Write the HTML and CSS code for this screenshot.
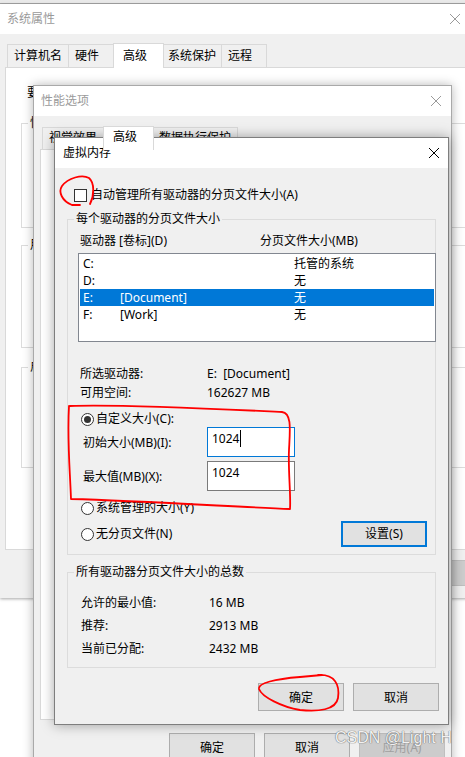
FILE: index.html
```html
<!DOCTYPE html>
<html lang="zh-CN">
<head>
<meta charset="utf-8">
<title>虚拟内存</title>
<link rel="stylesheet" href="styles.css">
</head>
<body>
<div class="desk">
  <div class="backwin"></div>

  <section class="win win1">
    <header class="titlebar tb1">
      <span class="ttl inactive">系统属性</span>
      <svg class="xicon" width="10" height="10" viewBox="0 0 10 10"><path d="M0 0L10 10M10 0L0 10" stroke="#9a9a9a" stroke-width="1"/></svg>
    </header>
    <div class="wbody">
      <nav class="tabs tabs1">
        <span class="tab">计算机名</span>
        <span class="tab">硬件</span>
        <span class="tab sel">高级</span>
        <span class="tab narrow">系统保护</span>
        <span class="tab">远程</span>
      </nav>
      <div class="panel panel1">
        <p class="intro">要进行大多数更改，你必须作为管理员登录。</p>
        <div class="grp bg-white g1a"><div class="gt white">性能</div></div>
        <div class="grp bg-white g1b"><div class="gt white">用户配置文件</div></div>
        <div class="grp bg-white g1c"><div class="gt white">启动和故障恢复</div></div>
      </div>
      <div class="btnrow btnrow1">
        <span class="btn">确定</span>
        <span class="btn">取消</span>
        <span class="btn disabled">应用(A)</span>
      </div>
    </div>
  </section>

  <section class="win win2">
    <header class="titlebar tb2">
      <span class="ttl inactive">性能选项</span>
      <svg class="xicon" width="10" height="10" viewBox="0 0 10 10"><path d="M0 0L10 10M10 0L0 10" stroke="#9a9a9a" stroke-width="1"/></svg>
    </header>
    <div class="wbody">
      <nav class="tabs tabs2">
        <span class="tab">视觉效果</span>
        <span class="tab sel">高级</span>
        <span class="tab">数据执行保护</span>
      </nav>
      <div class="panel panel2"></div>
      <div class="btnrow btnrow2">
        <span class="btn">确定</span>
        <span class="btn">取消</span>
        <span class="btn disabled">应用(A)</span>
      </div>
    </div>
  </section>

  <section class="win win3">
    <header class="titlebar tb3">
      <span class="ttl">虚拟内存</span>
      <svg class="xicon" width="10" height="10" viewBox="0 0 10 10"><path d="M0 0L10 10M10 0L0 10" stroke="#000" stroke-width="1"/></svg>
    </header>
    <div class="wbody body3">
      <label class="checkrow"><span class="checkbox"></span>自动管理所有驱动器的分页文件大小(A)</label>

      <div class="grp g3a">
        <div class="gt">每个驱动器的分页文件大小</div>
        <div class="listhead"><span class="c1">驱动器 [卷标](D)</span><span>分页文件大小(MB)</span></div>
        <div class="listbox">
          <div class="lrow"><span class="ld">C:</span><span class="ll"></span><span>托管的系统</span></div>
          <div class="lrow"><span class="ld">D:</span><span class="ll"></span><span>无</span></div>
          <div class="lrow selrow"><span class="ld">E:</span><span class="ll">[Document]</span><span>无</span></div>
          <div class="lrow"><span class="ld">F:</span><span class="ll">[Work]</span><span>无</span></div>
        </div>
        <div class="info">
          <div class="irow"><span class="ik">所选驱动器:</span><span>E:&nbsp;&nbsp;[Document]</span></div>
          <div class="irow"><span class="ik">可用空间:</span><span>162627 MB</span></div>
        </div>
        <div class="radiorow r1"><span class="radio on"></span>自定义大小(C):</div>
        <div class="frow"><span class="fk">初始大小(MB)(I):</span><span class="field focus">1024<span class="caret"></span></span></div>
        <div class="frow f2"><span class="fk">最大值(MB)(X):</span><span class="field">1024</span></div>
        <div class="radiorow r2"><span class="radio"></span>系统管理的大小(Y)</div>
        <div class="radiorow r3"><span class="radio"></span>无分页文件(N)<span class="btn default setbtn">设置(S)</span></div>
      </div>

      <div class="grp g3b">
        <div class="gt">所有驱动器分页文件大小的总数</div>
        <div class="totals">
          <div class="trow"><span class="tk">允许的最小值:</span><span>16 MB</span></div>
          <div class="trow"><span class="tk">推荐:</span><span>2913 MB</span></div>
          <div class="trow"><span class="tk">当前已分配:</span><span>2432 MB</span></div>
        </div>
      </div>

      <div class="btnrow btnrow3">
        <span class="btn">确定</span>
        <span class="btn">取消</span>
      </div>
    </div>
  </section>

  <svg class="marks" width="465" height="757" viewBox="0 0 465 757">
    <path d="M90 204 C94 196 95 183 89 178 C82 174 68 178 62 186 C58 192 62 201 72 205 L80 205" fill="none" stroke="#f00" stroke-width="1.8" stroke-linecap="round"/>
    <path d="M70 406 C120 404 240 410 282 412 C292 413 290 430 289 450 C288 470 291 495 290 509 C240 507 140 501 71 499 C70 470 67 440 69 406" fill="none" stroke="#f00" stroke-width="1.8" stroke-linecap="round" stroke-linejoin="round"/>
    <path d="M318 675 C335 674 340 685 338 698 C336 710 318 712 300 710 C282 707 262 697 259 689 C258 683 275 679 300 677 L322 675" fill="none" stroke="#f00" stroke-width="1.8" stroke-linecap="round"/>
  </svg>

  <div class="watermark">CSDN @Light H</div>
</div>
</body>
</html>
```

FILE: styles.css
```css
* { box-sizing: border-box; }
body {
  margin: 0;
  font-family: "Noto Sans", "Noto Sans CJK SC", sans-serif;
  font-size: 12px;
  color: #000;
  background: #fff;
}
.desk {
  position: relative;
  width: 465px;
  height: 757px;
  overflow: hidden;
  background: #fff;
}
.backwin {
  position: absolute;
  left: 0; top: 0;
  width: 465px; height: 4px;
  background: #e9e9e9;
  border-bottom: 1px solid #a5a5a5;
}

/* windows */
.win {
  position: absolute;
  background: #f0f0f0;
  display: flex;
  flex-direction: column;
}
.titlebar {
  flex: none;
  height: 30px;
  background: #fff;
  display: flex;
  align-items: center;
  justify-content: space-between;
  line-height: 16px;
}
.ttl.inactive { color: #9a9a9a; }
.xicon { display: block; }
.wbody { display: flex; flex-direction: column; flex: 1; }

.win1 { left: 0; top: 4px; width: 478px; height: 594px; box-shadow: 0 1px 3px rgba(0,0,0,.35); }
.tb1 { padding: 0 18px 0 7px; }
.win1 .wbody { padding-top: 10px; }

.win2 { left: 33px; top: 85px; width: 419px; height: 720px; border: 1px solid #a9a9a9; box-shadow: 0 0 10px rgba(0,0,0,.28); }
.tb2 { padding: 0 10px 0 7px; }
.win2 .wbody { padding-top: 11px; }

.win3 { left: 54px; top: 137px; width: 395px; height: 588px; border: 1px solid #7e7e7e; box-shadow: 0 0 12px rgba(0,0,0,.35); }
.tb3 { padding: 0 9px 0 8px; }

/* tabs */
.tabs { display: flex; align-items: flex-end; height: 23px; flex: none; }
.tabs1 { padding-left: 7px; }
.tabs2 { padding-left: 8px; height: 22px; }
.tab {
  height: 23px;
  min-width: 46px;
  padding: 0 6px;
  border: 1px solid #d9d9d9;
  border-bottom: none;
  background: #f0f0f0;
  line-height: 21px;
  white-space: nowrap;
}
.tabs2 .tab { height: 22px; line-height: 20px; }
.tab + .tab { margin-left: -1px; }
.tab.narrow { padding: 0 5px; }
.tab.sel {
  position: relative;
  z-index: 1;
  height: 25px;
  min-width: 51px;
  padding: 0 9px;
  margin-bottom: -1px;
  background: #fff;
  line-height: 23px;
  margin-left: -1px;
  margin-right: -1px;
}
.tabs2 .tab.sel { height: 24px; line-height: 20px; }

.panel { background: #fff; border: 1px solid #d9d9d9; flex: none; }
.panel1 { margin: 0 5px; height: 483px; padding: 16px 0 0 15px; }
.panel2 { margin: 0 6px; height: 571px; }
.intro { margin: 0 0 0 6px; line-height: 18px; white-space: nowrap; }

/* group boxes */
.grp { border: 1px solid #dcdcdc; }
.gt {
  width: fit-content;
  margin: -10px 0 0 6px;
  padding: 0 2px;
  line-height: 18px;
  background: #f0f0f0;
  white-space: nowrap;
}
.gt.white { background: #fff; }
.g1a { margin-top: 21px; height: 105px; border-right: none; }
.g1b { margin-top: 17px; height: 103px; border-right: none; }
.g1c { margin-top: 19px; height: 101px; border-right: none; }

/* buttons */
.btnrow { display: flex; justify-content: flex-end; flex: none; }
.btn {
  display: flex;
  align-items: center;
  justify-content: center;
  width: 86px;
  background: #e1e1e1;
  border: 1px solid #adadad;
  white-space: nowrap;
}
.btn.disabled { background: #cccccc; border-color: #bfbfbf; color: #a0a0a0; }
.btn.default { border: 2px solid #0078d7; }
.btnrow1 { margin-top: 10px; padding-right: 5px; gap: 9px; height: 26px; }
.btnrow2 { margin-top: 13px; padding-right: 6px; gap: 9px; height: 28px; }
.btnrow3 { margin-top: 15px; padding-right: 9px; gap: 9px; height: 28px; }

/* virtual memory dialog */
.body3 { padding-top: 19px; }
.checkrow {
  display: flex;
  align-items: center;
  margin-left: 19px;
  line-height: 16px;
  white-space: nowrap;
}
.checkbox {
  width: 13px; height: 13px;
  border: 1px solid #333;
  background: #fff;
  margin-right: 4px;
  flex: none;
}
.g3a { margin: 16px 12px 0; padding-bottom: 7px; }
.g3b { margin: 17px 12px 0; padding-bottom: 7px; }

.listhead { display: flex; margin-top: 5px; padding-left: 12px; line-height: 16px; white-space: nowrap; }
.listhead .c1 { width: 180px; }

.listbox {
  margin: 4px -1px 0 10px;
  height: 89px;
  border: 1px solid #828790;
  background: #fff;
  padding: 1px;
}
.lrow { display: flex; height: 17px; line-height: 17px; padding-left: 3px; white-space: nowrap; }
.lrow .ld { width: 37px; }
.lrow .ll { width: 174px; }
.selrow { background: #0078d7; color: #fff; }

.info { margin-top: 22px; padding-left: 12px; }
.irow { display: flex; line-height: 19px; white-space: nowrap; }
.irow .ik { width: 127px; }

.radiorow { display: flex; align-items: center; margin-left: 13px; line-height: 16px; white-space: nowrap; }
.radio {
  width: 13px; height: 13px;
  border: 1px solid #333;
  border-radius: 50%;
  background: #fff;
  margin-right: 2px;
  flex: none;
  display: flex;
  align-items: center;
  justify-content: center;
}
.radio.on::after {
  content: "";
  width: 7px; height: 7px;
  border-radius: 50%;
  background: #333;
}
.r1 { margin-top: 9px; }
.r2 { margin-top: 9px; }
.r3 { margin-top: 5px; height: 26px; margin-right: 8px; }
.setbtn { margin-left: auto; height: 26px; }

.frow { display: flex; align-items: center; height: 30px; margin-left: 15px; white-space: nowrap; }
.frow.f2 { margin-top: 4px; }
.frow .fk { width: 124px; }
.field {
  width: 88px;
  height: 30px;
  background: #fff;
  border: 1px solid #7a7a7a;
  padding: 2px 0 0 4px;
  line-height: 18px;
  display: flex;
  align-items: flex-start;
}
.field.focus { border-color: #0078d7; }
.caret { width: 1px; height: 17px; background: #000; margin-left: 1px; }

.totals { margin-top: 10px; padding-left: 13px; }
.trow { display: flex; line-height: 23px; white-space: nowrap; }
.trow .tk { width: 128px; }

/* annotations */
.marks { position: absolute; left: 0; top: 0; pointer-events: none; }
.watermark {
  position: absolute;
  left: 335px;
  top: 728px;
  font-family: "Liberation Sans", Arial, sans-serif;
  font-size: 16px;
  line-height: 20px;
  color: rgba(255,255,255,.92);
  text-shadow: 0 0 1px #6a6a6a, 0 0 1px #6a6a6a;
  white-space: nowrap;
}
```
